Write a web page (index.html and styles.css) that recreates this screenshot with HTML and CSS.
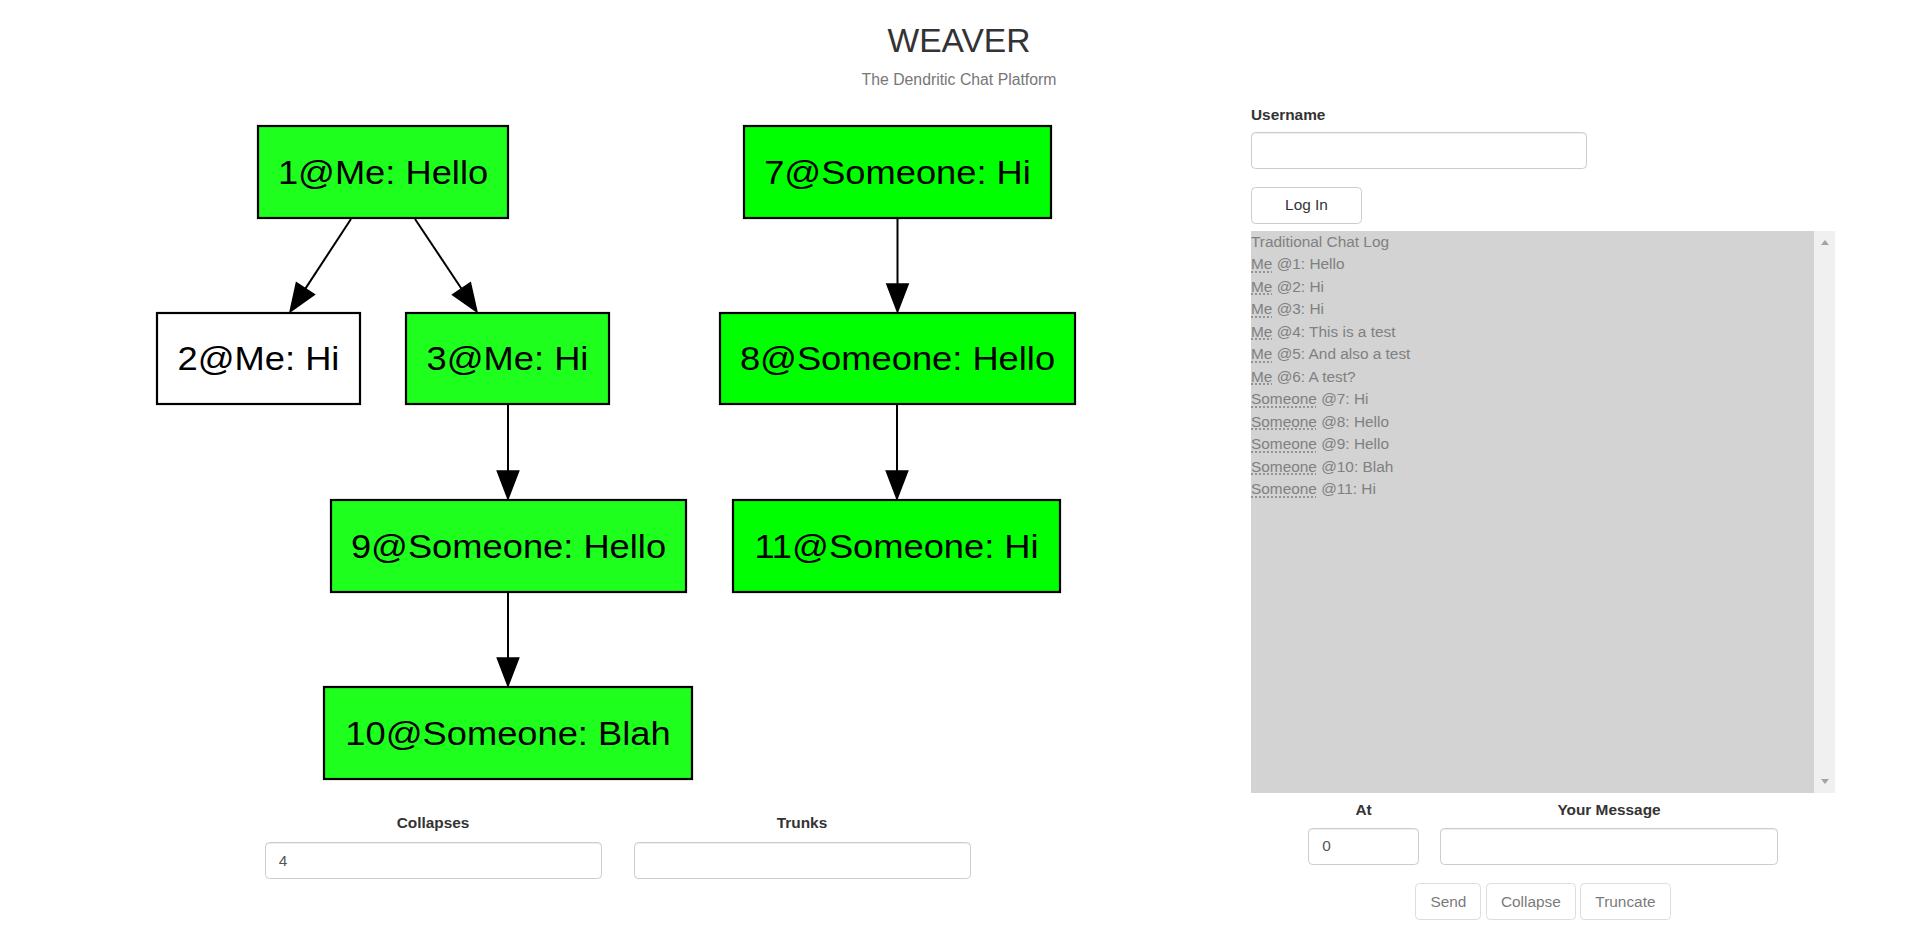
FILE: index.html
```html
<!DOCTYPE html>
<html lang="en">
<head>
<meta charset="utf-8">
<title>Weaver</title>
<link rel="stylesheet" href="styles.css">
</head>
<body>
<header class="header">
  <h1 class="title">WEAVER</h1>
  <p class="subtitle">The Dendritic Chat Platform</p>
</header>
<main class="layout">
  <section class="graph-col">
    <svg class="graph" viewBox="0 95 1235 717" width="1235" height="717" xmlns="http://www.w3.org/2000/svg">
      <!-- edges -->
      <line class="edge" x1="351" y1="219" x2="305.4" y2="288.6"/>
      <polygon class="arrowhead" points="290,312 314.4,294.5 296.4,282.7"/>
      <line class="edge" x1="415" y1="219" x2="461.5" y2="288.7"/>
      <polygon class="arrowhead" points="477,312 452.6,294.7 470.4,282.7"/>
      <line class="edge" x1="508" y1="405" x2="508" y2="471"/>
      <polygon class="arrowhead" points="508,499 497.3,471 518.7,471"/>
      <line class="edge" x1="508" y1="593" x2="508" y2="658"/>
      <polygon class="arrowhead" points="508,686 497.3,658 518.7,658"/>
      <line class="edge" x1="897.5" y1="219" x2="897.5" y2="284"/>
      <polygon class="arrowhead" points="897.5,312 886.8,284 908.2,284"/>
      <line class="edge" x1="897" y1="405" x2="897" y2="471"/>
      <polygon class="arrowhead" points="897,499 886.3,471 907.7,471"/>
      <!-- nodes -->
      <rect class="node node-green" x="258" y="126" width="250" height="92"/>
      <text class="node-label" transform="translate(383 183.6) scale(1.1 1)">1@Me: Hello</text>
      <rect class="node node-white" x="157" y="313" width="203" height="91"/>
      <text class="node-label" transform="translate(258.5 370.1) scale(1.1 1)">2@Me: Hi</text>
      <rect class="node node-green" x="406" y="313" width="203" height="91"/>
      <text class="node-label" transform="translate(507.5 370.1) scale(1.1 1)">3@Me: Hi</text>
      <rect class="node node-green" x="331" y="500" width="355" height="92"/>
      <text class="node-label" transform="translate(508.5 557.6) scale(1.1 1)">9@Someone: Hello</text>
      <rect class="node node-green" x="324" y="687" width="368" height="92"/>
      <text class="node-label" transform="translate(508 744.6) scale(1.1 1)">10@Someone: Blah</text>
      <rect class="node node-lime" x="744" y="126" width="307" height="92"/>
      <text class="node-label" transform="translate(897.5 183.6) scale(1.1 1)">7@Someone: Hi</text>
      <rect class="node node-lime" x="720" y="313" width="355" height="91"/>
      <text class="node-label" transform="translate(897.5 370.1) scale(1.1 1)">8@Someone: Hello</text>
      <rect class="node node-lime" x="733" y="500" width="327" height="92"/>
      <text class="node-label" transform="translate(896.5 557.6) scale(1.1 1)">11@Someone: Hi</text>
    </svg>
    <div class="graph-form">
      <div class="field field-wide">
        <label class="field-label" for="collapses">Collapses</label>
        <input class="input" id="collapses" type="text" value="4">
      </div>
      <div class="field field-wide">
        <label class="field-label" for="trunks">Trunks</label>
        <input class="input" id="trunks" type="text">
      </div>
    </div>
  </section>
  <section class="chat-col">
    <label class="label" for="username">Username</label>
    <input class="input username" id="username" type="text">
    <button class="btn login" type="button">Log In</button>
    <div class="chat-log">
      <div class="chat-lines">
        <div class="chat-line">Traditional Chat Log</div>
        <div class="chat-line"><abbr title="Me">Me</abbr> @1: Hello</div>
        <div class="chat-line"><abbr title="Me">Me</abbr> @2: Hi</div>
        <div class="chat-line"><abbr title="Me">Me</abbr> @3: Hi</div>
        <div class="chat-line"><abbr title="Me">Me</abbr> @4: This is a test</div>
        <div class="chat-line"><abbr title="Me">Me</abbr> @5: And also a test</div>
        <div class="chat-line"><abbr title="Me">Me</abbr> @6: A test?</div>
        <div class="chat-line"><abbr title="Someone">Someone</abbr> @7: Hi</div>
        <div class="chat-line"><abbr title="Someone">Someone</abbr> @8: Hello</div>
        <div class="chat-line"><abbr title="Someone">Someone</abbr> @9: Hello</div>
        <div class="chat-line"><abbr title="Someone">Someone</abbr> @10: Blah</div>
        <div class="chat-line"><abbr title="Someone">Someone</abbr> @11: Hi</div>
      </div>
      <div class="scrolltrack">
        <span class="arrow arrow-up"></span>
        <span class="arrow arrow-down"></span>
      </div>
    </div>
    <div class="compose">
      <div class="field field-at">
        <label class="field-label" for="at">At</label>
        <input class="input" id="at" type="text" value="0">
      </div>
      <div class="field field-msg">
        <label class="field-label" for="message">Your Message</label>
        <input class="input" id="message" type="text">
      </div>
    </div>
    <div class="actions">
      <button class="btn btn-disabled" type="button">Send</button>
      <button class="btn btn-disabled" type="button">Collapse</button>
      <button class="btn btn-disabled" type="button">Truncate</button>
    </div>
  </section>
</main>
</body>
</html>
```
FILE: styles.css
```css
* { box-sizing: border-box; }

html, body {
  margin: 0;
  padding: 0;
  background: #fff;
}

body {
  font-family: "Liberation Sans", Arial, Helvetica, sans-serif;
  font-size: 15.4px;
  line-height: 22px;
  color: #333;
  width: 1913px;
  height: 928px;
  overflow: hidden;
}

.header {
  height: 95px;
  padding-top: 21.6px;
  padding-left: 5px;
  text-align: center;
}

.title {
  margin: 0;
  font-size: 33.6px;
  line-height: 37px;
  font-weight: 400;
  color: #333;
}

.subtitle {
  margin: 10.6px 0 0;
  font-size: 15.8px;
  line-height: 22px;
  color: #777;
}

.layout {
  display: flex;
  align-items: flex-start;
}

.graph-col {
  flex: 0 0 1235px;
  width: 1235px;
}

.graph {
  display: block;
}

.edge {
  stroke: #000;
  stroke-width: 2;
}

.arrowhead {
  fill: #000;
  stroke: #000;
  stroke-width: 1.5;
  stroke-linejoin: miter;
}

.node {
  stroke: #000;
  stroke-width: 2.2;
}

.node-green { fill: #1eff1e; }
.node-lime { fill: #00ff00; }
.node-white { fill: #ffffff; }

.node-label {
  font-family: "Liberation Sans", Arial, Helvetica, sans-serif;
  font-size: 33px;
  fill: #000;
  text-anchor: middle;
}

.graph-form {
  display: flex;
  justify-content: center;
  gap: 32px;
}

.field {
  display: flex;
  flex-direction: column;
  align-items: stretch;
}

.field-wide { width: 337px; }
.field-at { width: 111px; }
.field-msg { width: 338px; }

.field-label {
  display: block;
  text-align: center;
  font-weight: 700;
  line-height: 22px;
  margin-bottom: 8px;
}

.compose .field-label {
  margin-bottom: 6.3px;
}

.input {
  display: block;
  width: 100%;
  height: 37px;
  padding: 0 13.2px;
  font-family: inherit;
  font-size: 15.4px;
  color: #555;
  background: #fff;
  border: 1px solid #ccc;
  border-radius: 4.4px;
  box-shadow: inset 0 1px 1px rgba(0, 0, 0, 0.075);
  outline: none;
}

.chat-col {
  margin-left: 16px;
  width: 584px;
  padding-top: 8.7px;
}

.label {
  display: block;
  font-weight: 700;
  line-height: 22px;
  margin-bottom: 6.3px;
}

.username {
  width: 336px;
}

.btn {
  display: inline-flex;
  align-items: center;
  justify-content: center;
  height: 37px;
  padding: 0 14px;
  font-family: inherit;
  font-size: 15.4px;
  color: #333;
  background: #fff;
  border: 1px solid #ccc;
  border-radius: 4.4px;
}

.login {
  display: flex;
  width: 111px;
  margin-top: 18px;
}

.btn-disabled {
  opacity: 0.65;
}

.chat-log {
  display: flex;
  margin-top: 7px;
  height: 562px;
}

.chat-lines {
  flex: 1;
  background: #d3d3d3;
  color: #808080;
  line-height: 22.5px;
  margin: 0;
}

.chat-line {
  white-space: nowrap;
}

.chat-line abbr {
  text-decoration: underline dotted;
  text-underline-offset: 2px;
}

.scrolltrack {
  flex: 0 0 21px;
  background: #f0f0f0;
  display: flex;
  flex-direction: column;
  justify-content: space-between;
  align-items: center;
  padding: 9px 0;
}

.arrow {
  width: 0;
  height: 0;
  border-left: 4.5px solid transparent;
  border-right: 4.5px solid transparent;
}

.arrow-up {
  border-bottom: 5px solid #a3a3a3;
}

.arrow-down {
  border-top: 5px solid #a3a3a3;
}

.compose {
  display: flex;
  justify-content: center;
  gap: 21px;
  margin-top: 6.5px;
}

.actions {
  display: flex;
  justify-content: center;
  gap: 4.5px;
  margin-top: 18.5px;
}
```
